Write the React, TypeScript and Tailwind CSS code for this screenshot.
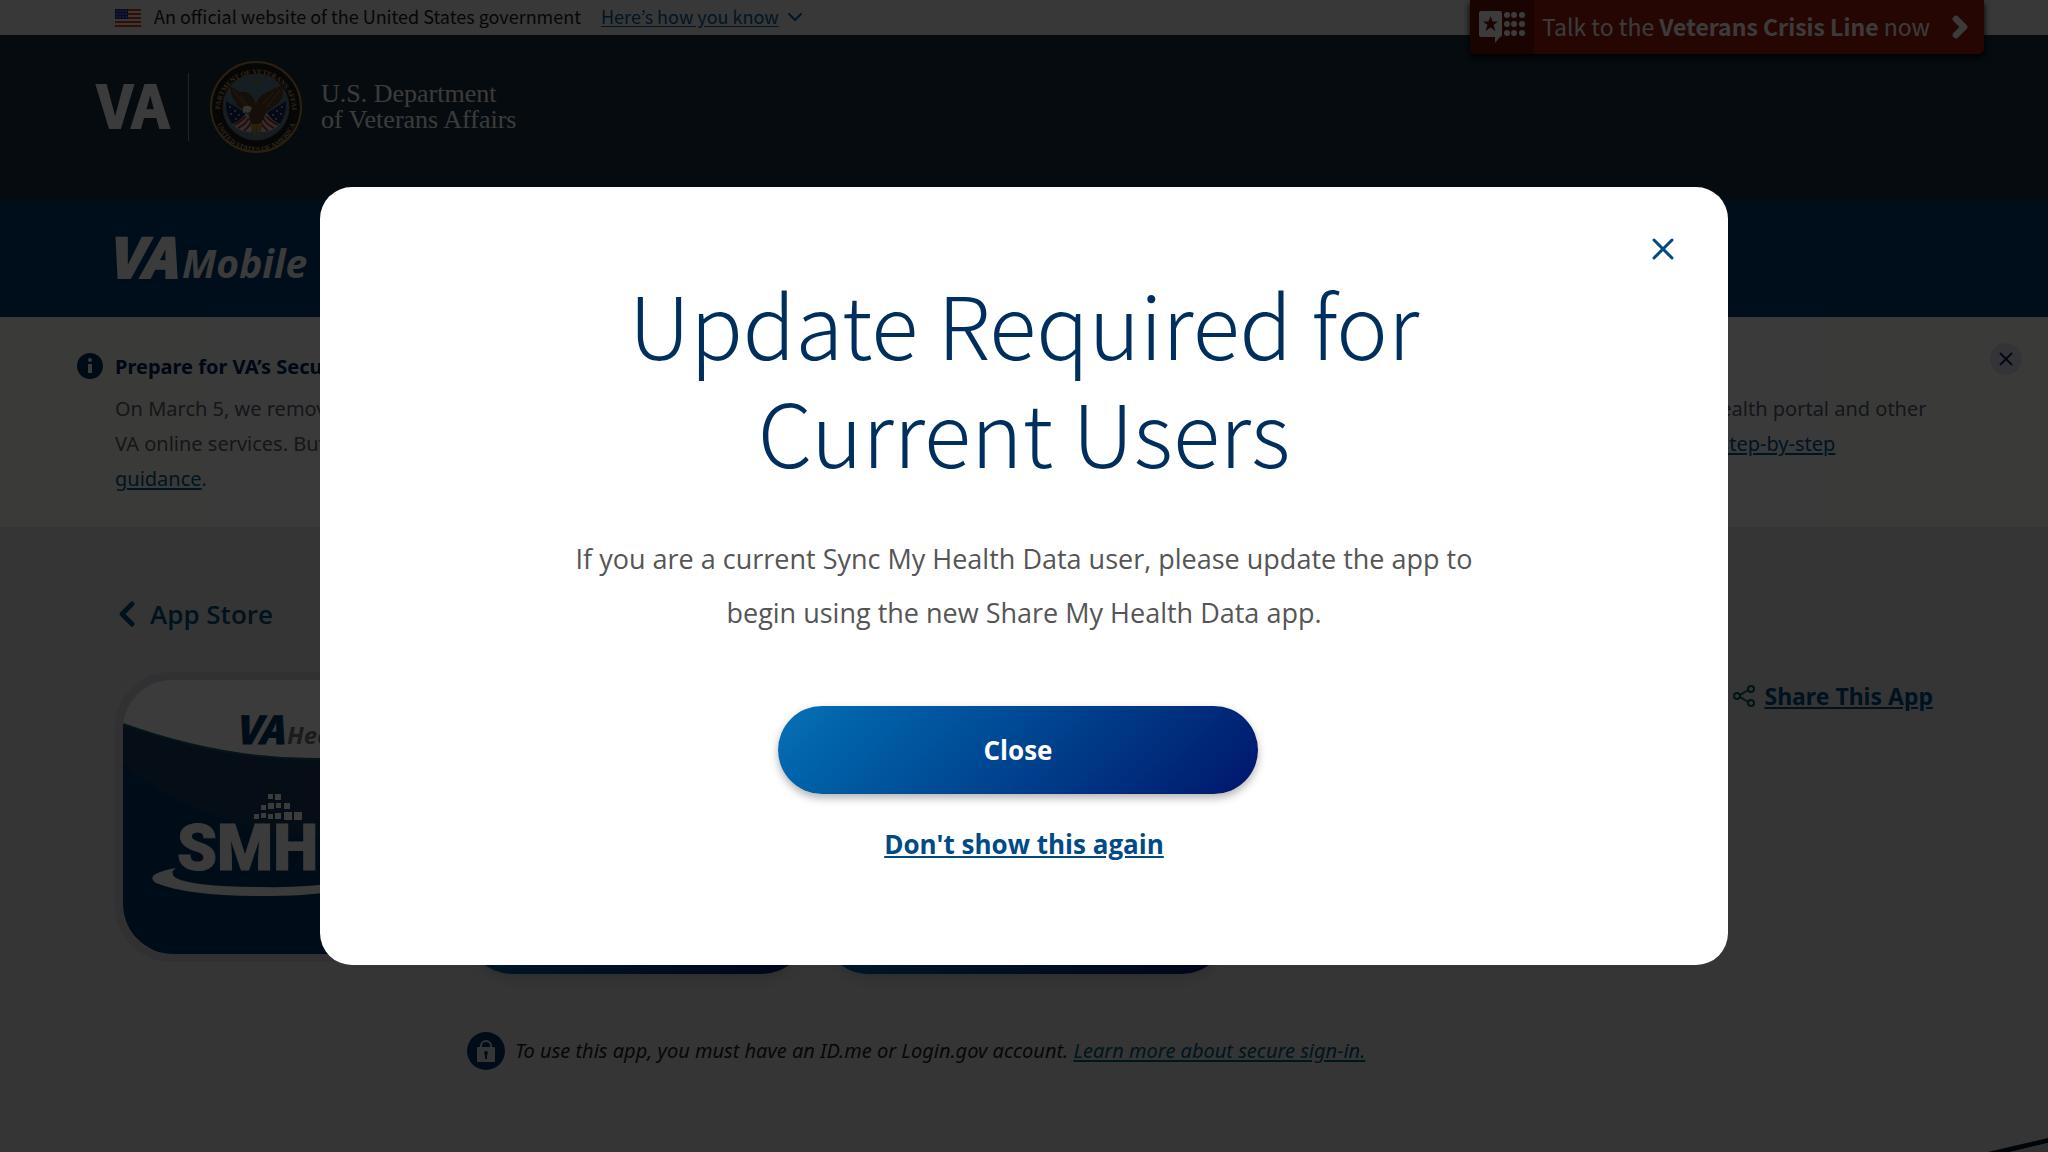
import { ChevronDown, ChevronLeft, ChevronRight, X } from "lucide-react";

const PIXELS = [
  [95, 0, 5], [102, 0, 6],
  [88, 11, 5], [95, 9, 6], [103, 9, 5], [111, 9, 6],
  [81, 20, 5], [88, 19, 5], [95, 20, 5], [102, 19, 6], [111, 18, 8], [121, 18, 8],
];

function FlagIcon() {
  return (
    <svg viewBox="0 0 26 18" className="h-[18px] w-[26px]" aria-hidden="true">
      <rect width="26" height="18" fill="#f0f0f0" />
      {[0, 4, 8, 12, 16].map((y) => (
        <rect key={y} y={y} width="26" height="2" fill="#db3e1f" />
      ))}
      <rect width="13" height="10" fill="#1e33b1" />
      {[2, 5, 8].map((y) =>
        [2, 5, 8, 11].map((x) => <circle key={`${x}-${y}`} cx={x} cy={y} r="0.7" fill="#f0f0f0" />)
      )}
    </svg>
  );
}

function Seal() {
  return (
    <svg viewBox="0 0 92 92" className="size-[92px] overflow-visible" aria-hidden="true">
      <circle cx="46" cy="46" r="45" fill="#1a1a22" stroke="#b58c42" strokeWidth="2" />
      <circle cx="46" cy="46" r="33" fill="#5d8499" stroke="#8b6d35" strokeWidth="1" />
      <defs>
        <path id="seal-top" d="M10 49 A36 36 0 0 1 82 49" />
        <path id="seal-bottom" d="M4.500 49 A41.500 41.500 0 0 0 87.500 49" />
      </defs>
      <text fill="#c9a763" fontSize="7" fontWeight="700" fontFamily="Liberation Serif, serif">
        <textPath href="#seal-top" startOffset="50%" textAnchor="middle">DEPARTMENT OF VETERANS AFFAIRS</textPath>
      </text>
      <text fill="#c9a763" fontSize="7" fontWeight="700" fontFamily="Liberation Serif, serif">
        <textPath href="#seal-bottom" startOffset="50%" textAnchor="middle">UNITED STATES OF AMERICA</textPath>
      </text>
      <path d="M46 16l1.500 3.500 3.500.5-3 2 1 4-3-2-3 2 1-4-3-2 3.500-.5z" fill="#76804f" />
      {/* Flags */}
      <path d="M16 40L36 52 33 66 22 63Q15 52 16 40z" fill="#20265c" />
      <path d="M76 40L57 52 60 66 70 63Q77 52 76 40z" fill="#20265c" />
      <path d="M22 63Q31 60 36 52L44 60 41 71Q31 72 22 63z" fill="#d8c9bd" />
      <path d="M70 63Q62 60 57 52L48 60 51 71Q61 72 70 63z" fill="#d8c9bd" />
      <path d="M24 64Q31 61 36 55M28 67Q35 64 39 57M34 70Q39 66 42 60M68 64Q61 61 56 55M64 67Q57 64 53 57M58 70Q53 66 50 60" stroke="#a63436" strokeWidth="2" fill="none" />
      {[[20, 46], [25, 50], [21, 53], [29, 54], [26, 58], [72, 46], [67, 50], [71, 53], [63, 54], [66, 58]].map(([x, y]) => (
        <circle key={`${x}-${y}`} cx={x} cy={y} r="0.9" fill="#d5d5d5" />
      ))}
      {/* Eagle */}
      <path d="M20 24Q27 32 36 31 43 34 46 43 49 34 57 31L72 24Q75 38 67 43 60 49 56 51 55 58 49 63L42 63Q37 56 40 50L34 48Q24 45 27 42 20 36 20 24z" fill="#5e3f2a" />
      <path d="M23 29L34 44M30 34L38 46M70 29L57 46M64 31L53 43" stroke="#85603f" strokeWidth="1.500" />
      <path d="M33 46Q39 43 42 47L40 51 33 52z" fill="#e5dfd2" />
      <path d="M40 64L45 76 46 65 49 77 53 62z" fill="#b78b35" />
    </svg>
  );
}

function AppIcon() {
  return (
    <svg viewBox="0 0 274 274" className="size-[274px]" role="img" aria-label="VA Health SMHD">
      <defs>
        <clipPath id="app-icon-clip"><rect width="274" height="274" rx="50" /></clipPath>
      </defs>
      <g clipPath="url(#app-icon-clip)">
        <rect width="274" height="274" fill="#fcfcfc" />
        <path d="M0 44Q100 80 196 79 240 78 274 64V274H0z" fill="#003a6e" />
        <path d="M0 44Q100 80 196 79 240 78 274 64V160Q80 160 0 82z" fill="#173f5e" />
        <path d="M0 44Q100 80 196 79 240 78 274 64" fill="none" stroke="#126068" strokeWidth="2" />
        <text x="112" y="64" fill="#003a6e" stroke="#003a6e" fontSize="38" fontWeight="900" fontStyle="italic" fontFamily="Noto Sans CJK KR, sans-serif">VA</text>
        <text x="164" y="64" fill="#777777" fontSize="24" fontWeight="700" fontStyle="italic" fontFamily="Open Sans, sans-serif">Health</text>
        <g transform="translate(50 114)">
          {PIXELS.map(([x, y, s]) => (
            <rect key={`${x}-${y}`} x={x} y={y} width={s} height={s} fill="#fcfcfc" />
          ))}
        </g>
        <text x="54" y="190" fill="#fcfcfc" stroke="#fcfcfc" fontSize="64" fontWeight="900" fontFamily="Roboto, sans-serif">SMHD</text>
        <path d="M53 188Q20 194 33 203 65 216 137 216 230 216 242 199 244 193 226 188 240 197 220 202 185 208 137 207 70 207 53 198 46 193 53 188z" fill="#fcfcfc" />
      </g>
    </svg>
  );
}

function ShareIcon() {
  return (
    <svg viewBox="0 0 22 22" className="size-[22px]" fill="none" stroke="#00595c" strokeWidth="2" aria-hidden="true">
      <circle cx="4" cy="11" r="3" />
      <circle cx="18" cy="4" r="3" />
      <circle cx="18" cy="18" r="3" />
      <path d="M7 10l8-5M7 12l8 5" />
    </svg>
  );
}

function LockIcon() {
  return (
    <svg viewBox="0 0 38 38" className="size-[38px] shrink-0" aria-hidden="true">
      <circle cx="19" cy="19" r="19" fill="#003a6e" />
      <path d="M14 17v-3a5 5 0 0 1 10 0v3" fill="none" stroke="#e4e6ea" strokeWidth="2" />
      <rect x="10" y="15" width="18" height="15" rx="1" fill="#e4e6ea" />
      <circle cx="19" cy="21" r="2" fill="#003a6e" />
      <path d="M18 21h2v6h-2z" fill="#003a6e" />
    </svg>
  );
}

function CrisisIcon() {
  return (
    <svg viewBox="0 0 46 32" className="h-8 w-[46px]" fill="#ffffff" aria-hidden="true">
      <path d="M2 0h19q2 0 2 2v22q0 2-2 2l-5 6v-6H2q-2 0-2-2V2q0-2 2-2z" />
      <path d="M11.500 5l2 5.500h5.500l-4.500 3.500 2 6-5-3.500-5 3.500 2-6L4 10.500h5.500z" fill="#6e1207" />
      {[4, 13, 22].map((y) =>
        [28, 35, 43].map((x) => <circle key={`${x}-${y}`} cx={x} cy={y} r="3" />)
      )}
    </svg>
  );
}

function SiteHeader() {
  return (
    <header>
      <div className="flex h-[35px] items-center bg-[#f0f0f0] pl-[115px] font-['Noto_Sans_CJK_KR',sans-serif] text-[18px] leading-[33px] text-[#1b1b1b]">
        <FlagIcon />
        <span className="ml-[13px] pb-[2px]">An official website of the United States government</span>
        <button type="button" className="ml-5 flex items-center gap-1 pb-[2px] text-[#005ea2]">
          <span className="underline underline-offset-2">Here’s how you know</span>
          <ChevronDown className="size-6" strokeWidth={2} />
        </button>
      </div>
      <div className="flex h-[165px] items-start bg-[#182f40] pt-[26px] pl-[96px] text-white">
        <div className="flex h-[92px] items-center">
          <svg viewBox="0 0 76 48" className="h-12 w-[76px] overflow-visible" role="img" aria-label="VA">
            <text x="1" y="45" fill="#ffffff" stroke="#ffffff" strokeWidth="2" fontSize="58" fontWeight="700" fontFamily="Noto Sans CJK KR, sans-serif">VA</text>
          </svg>
          <div className="mx-4 h-[68px] w-px bg-[#8f9ba6]" />
          <div className="ml-[5px]">
            <Seal />
          </div>
          <p className="ml-[19px] font-['Liberation_Serif',serif] text-[26px] leading-[26px]">
            U.S. Department
            <br />
            of Veterans Affairs
          </p>
        </div>
      </div>
      <div className="flex h-[117px] items-center bg-[#003a75] pl-[115px]">
        <svg viewBox="0 0 200 48" className="h-12 w-[200px] overflow-visible" role="img" aria-label="VA Mobile">
          <text x="-8" y="43" fill="#ffffff" stroke="#ffffff" strokeWidth="2" fontSize="54" fontWeight="900" fontStyle="italic" fontFamily="Noto Sans CJK KR, sans-serif">VA</text>
          <text x="67" y="43" fill="#ffffff" fontSize="39" fontWeight="700" fontStyle="italic" fontFamily="Open Sans, sans-serif">Mobile</text>
        </svg>
      </div>
    </header>
  );
}

function CrisisLine() {
  return (
    <a
      href="#crisis"
      className="absolute top-0 right-16 flex h-[54px] items-center overflow-hidden rounded-b-md bg-[#a31c0c] pr-2 font-['Noto_Sans_CJK_KR',sans-serif] text-[23px] text-white shadow-[0_3px_6px_#000]"
    >
      <span className="mr-2 flex h-full w-16 items-center justify-center bg-[#6e1207]">
        <CrisisIcon />
      </span>
      <span className="pb-[2px]">
        Talk to the <b>Veterans Crisis Line</b> now
      </span>
      <ChevronRight className="ml-[14px] size-8" strokeWidth={5} />
    </a>
  );
}

function Notice() {
  return (
    <section className="relative bg-[#fbfcf2] px-[115px] pt-[33px] pb-[31px] font-['Noto_Sans',sans-serif]">
      <div className="absolute inset-y-0 right-[220px] left-[204px] bg-[#f8f8fc]" />
      <svg viewBox="0 0 26 26" className="absolute top-9 left-[77px] size-[26px]" aria-hidden="true">
        <circle cx="13" cy="13" r="13" fill="#00316a" />
        <circle cx="13" cy="7" r="2" fill="#fcfff3" />
        <path d="M11 11h4v9h-4z" fill="#fcfff3" />
      </svg>
      <div className="relative text-[20px]">
        <h2 className="leading-[34px] font-bold text-[#00205b]">Prepare for VA’s Secure Sign-in Changes</h2>
        <p className="mt-[7px] leading-[35px] whitespace-nowrap text-[#5b616b]">
          On March 5, we removed your option to sign in with a DS Logon username and password. You’ll now need one verified ID.me or Login.gov account for VA.gov, the new VA health portal and other
          <br />
          VA online services. But you don’t need to wait. We encourage you to create an account now and learn how to sign in. To find out how to do so, please read and follow these{" "}
          <a href="#guidance" className="text-[#00568f] underline underline-offset-2">
            step-by-step
            <br />
            guidance
          </a>
          .
        </p>
      </div>
      <button type="button" aria-label="Dismiss notice" className="absolute top-[26px] right-[26px] flex size-8 items-center justify-center rounded-full bg-[#dfe1f0] text-[#00205b]">
        <X className="size-[22px]" strokeWidth={2} />
      </button>
    </section>
  );
}

function AppDetails() {
  return (
    <main className="px-[115px] pt-[67px]">
      <a href="#store" className="flex w-fit items-center gap-[3px] text-[26px] leading-10 font-semibold text-[#004e7c]">
        <ChevronLeft className="-ml-2 size-10" strokeWidth={3} />
        App Store
      </a>
      <div className="mt-[38px] flex items-start">
        <div className="shrink-0 rounded-[56px] border-8 border-[#d4d4dc]">
          <AppIcon />
        </div>
        <div className="ml-[62px] grow">
          <h1 className="text-5xl leading-[70px] text-[#003a6e]">Share My Health Data</h1>
          <p className="h-[142px] pt-4 text-[20px] leading-[35px] text-[#5b616b]">Share your health data with the people you trust.</p>
          <div className="flex gap-4 text-[24px] font-bold text-white">
            <button type="button" className="h-[90px] w-[340px] rounded-full bg-linear-135 from-[#0071bc] to-[#00196b] shadow-lg">
              App Store
            </button>
            <button type="button" className="h-[90px] w-[404px] rounded-full bg-linear-135 from-[#0071bc] to-[#00196b] shadow-lg">
              Google Play
            </button>
          </div>
          <p className="mt-[58px] flex items-center gap-[10px] font-['Noto_Sans',sans-serif] text-[20px] leading-[38px] text-[#212121] italic">
            <LockIcon />
            <span>
              To use this app, you must have an ID.me or Login.gov account.{" "}
              <a href="#sign-in" className="text-[#005a78] underline underline-offset-2">
                Learn more about secure sign-in.
              </a>
            </span>
          </p>
        </div>
        <a href="#share" className="mt-2 flex shrink-0 items-center gap-[9px] font-['Noto_Sans',sans-serif] text-[23px] leading-8 font-bold text-[#004b87]">
          <ShareIcon />
          <span className="underline underline-offset-2">Share This App</span>
        </a>
      </div>
    </main>
  );
}

function UpdateDialog() {
  return (
    <div className="fixed inset-0 flex items-center justify-center bg-black/77">
      <div role="dialog" aria-modal="true" aria-labelledby="update-title" className="relative flex w-[68.75%] flex-col items-center rounded-[32px] bg-white pt-[81px] pb-[103px] text-center">
        <button type="button" aria-label="Close dialog" className="absolute top-11 right-[47px] text-[#004b87]">
          <X className="size-9" strokeWidth={2} />
        </button>
        <h2 id="update-title" className="font-['Noto_Sans_CJK_KR',sans-serif] text-[87px] leading-[108px] font-light text-[#002f5d]">
          Update Required for
          <br />
          Current Users
        </h2>
        <p className="mt-12 w-[940px] text-[27px] leading-[54px] text-[#555555]">
          If you are a current Sync My Health Data user, please update the app to begin using the new Share My Health Data app.
        </p>
        <button type="button" className="mt-[66px] mr-3 h-[88px] w-[480px] rounded-full bg-linear-135 from-[#0a71b5] to-[#00146b] text-[26px] font-bold text-white shadow-[0_4px_8px_rgba(0,0,0,0.3)]">
          Close
        </button>
        <a href="#dismiss" className="mt-8 text-[26px] leading-9 font-bold text-[#004b87] underline underline-offset-2">
          Don't show this again
        </a>
      </div>
    </div>
  );
}

export default function App() {
  return (
    <div className="relative h-screen overflow-hidden bg-[#e5e6ea] font-['Open_Sans',sans-serif]">
      <SiteHeader />
      <CrisisLine />
      <Notice />
      <AppDetails />
      {/* Corner of the artwork behind the page */}
      <svg viewBox="0 0 60 14" className="absolute right-0 bottom-0 h-[14px] w-[60px]" aria-hidden="true">
        <path d="M0 14L60 0V5L22 14z" fill="#00182c" />
        <path d="M22 14L60 5V14z" fill="#d0d0d0" />
      </svg>
      <UpdateDialog />
    </div>
  );
}
